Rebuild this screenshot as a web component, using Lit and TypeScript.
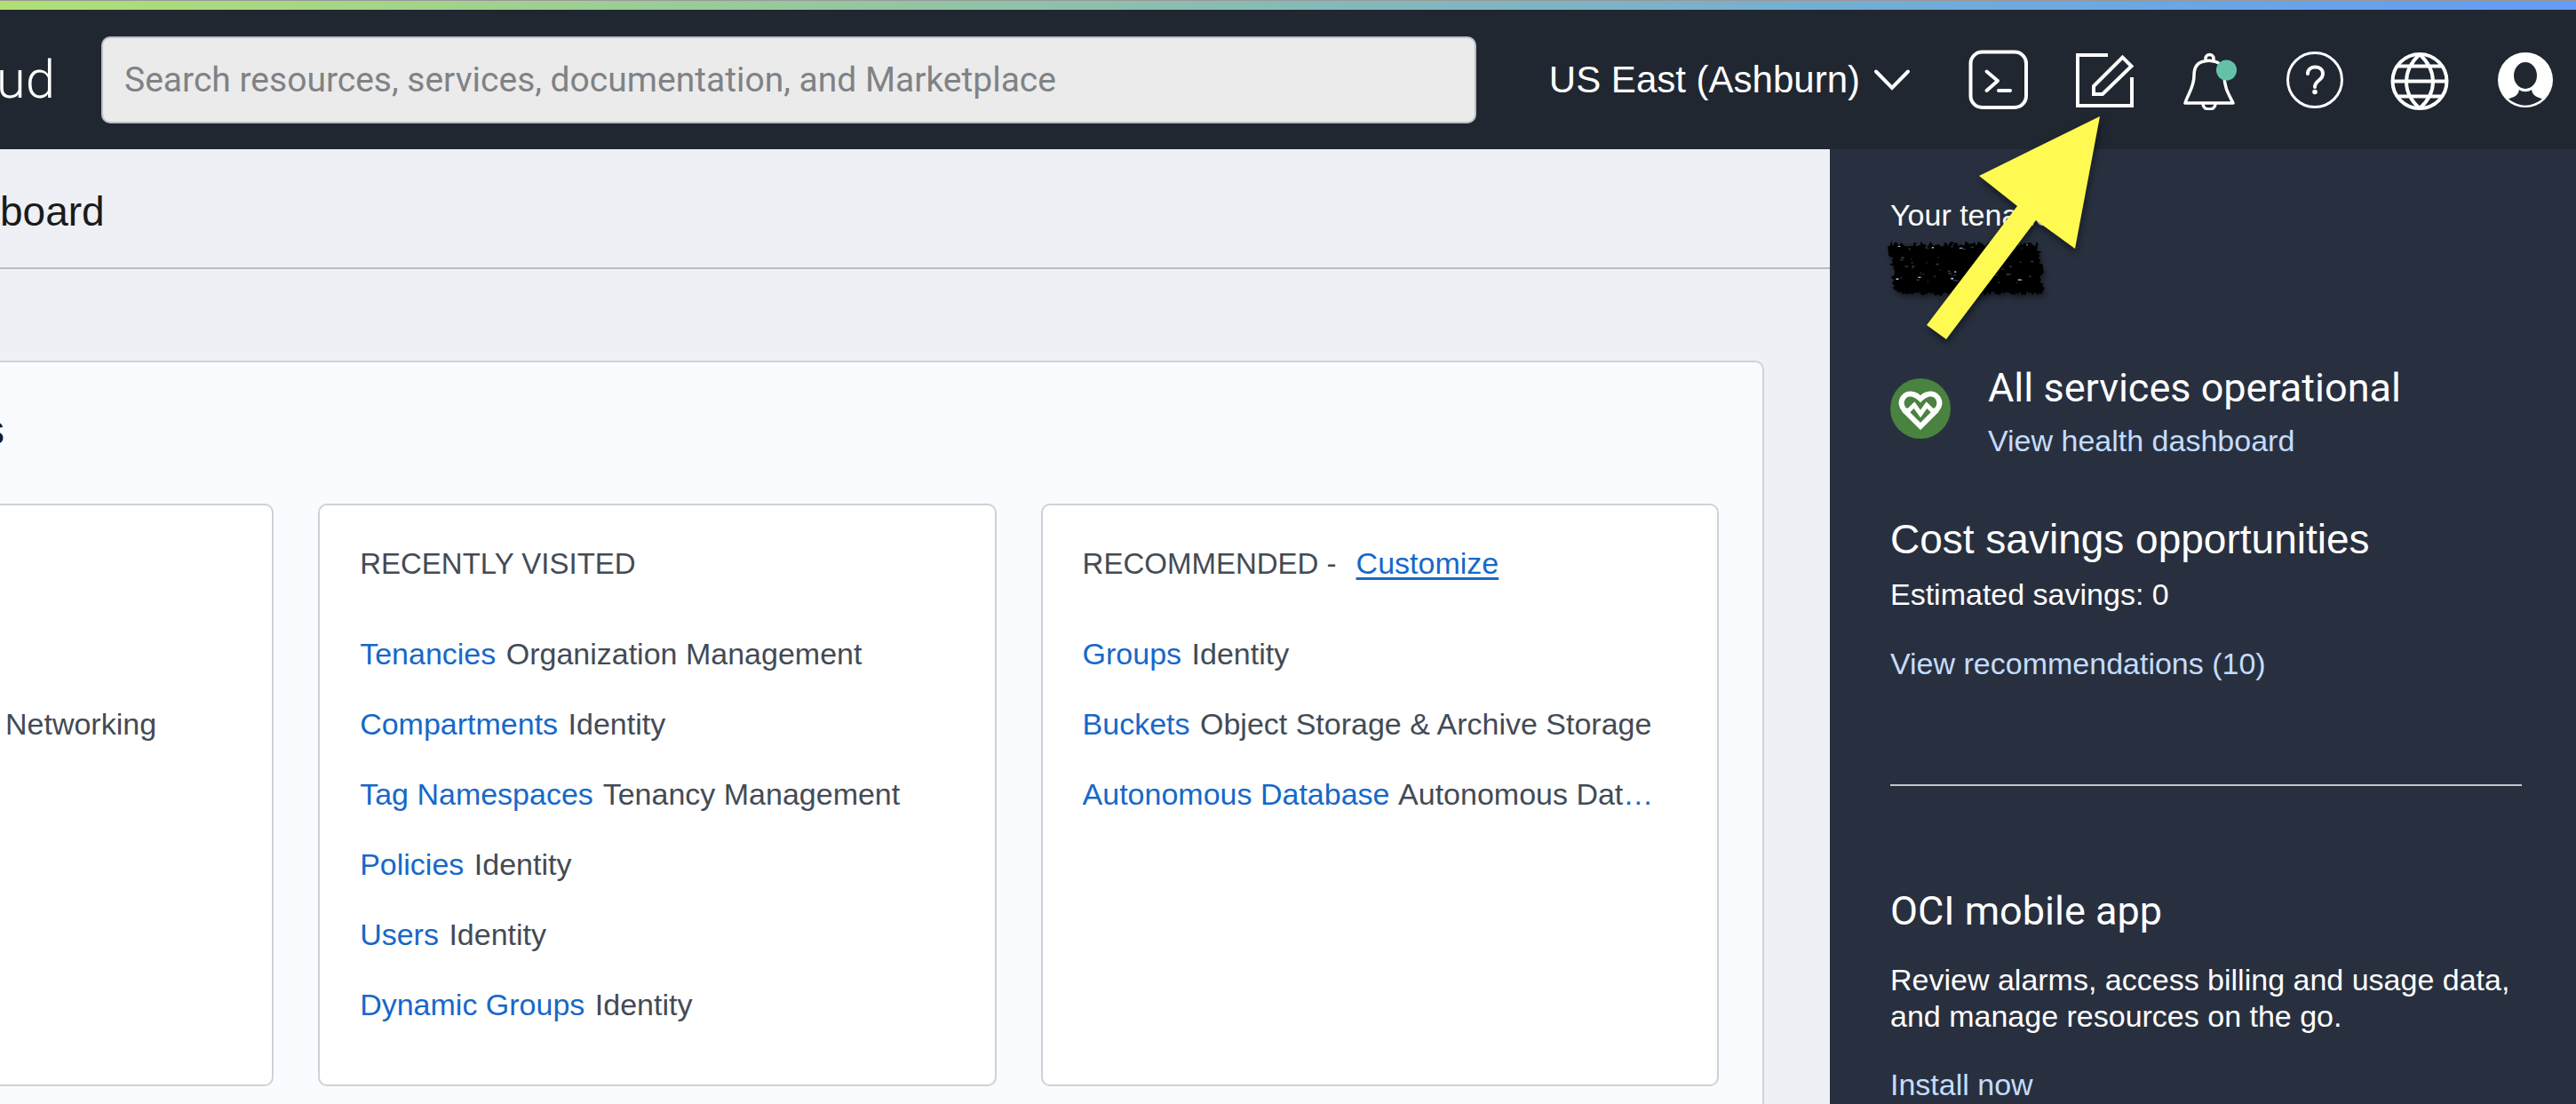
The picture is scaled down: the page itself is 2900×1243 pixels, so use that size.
import { LitElement, html, css, svg } from "lit";
import { customElement } from "lit/decorators.js";

interface ServiceLink {
  name: string;
  group: string;
}

const RECENT: ServiceLink[] = [
  { name: "Tenancies", group: "Organization Management" },
  { name: "Compartments", group: "Identity" },
  { name: "Tag Namespaces", group: "Tenancy Management" },
  { name: "Policies", group: "Identity" },
  { name: "Users", group: "Identity" },
  { name: "Dynamic Groups", group: "Identity" },
];

const RECOMMENDED: ServiceLink[] = [
  { name: "Groups", group: "Identity" },
  { name: "Buckets", group: "Object Storage & Archive Storage" },
  { name: "Autonomous Database", group: "Autonomous Database" },
];

/* Rough-edged marker outline and the specks left uncovered inside it. */
function scribble() {
  let seed = 7;
  const rnd = () => (seed = (seed * 16807) % 2147483647) / 2147483647;
  const pts: string[] = [];
  for (let x = 5; x < 172; x += 2) pts.push(`${x},${(rnd() * 7).toFixed(1)}`);
  for (let y = 5; y < 56; y += 2) pts.push(`${(167 + y / 8 + rnd() * 6).toFixed(1)},${y}`);
  for (let x = 174; x > 12; x -= 2) pts.push(`${x},${(57 + rnd() * 5).toFixed(1)}`);
  for (let y = 55; y > 4; y -= 2) pts.push(`${(y / 10 + rnd() * 6).toFixed(1)},${y}`);
  const specks = Array.from({ length: 70 }, (_, i) => {
    const x = 8 + rnd() * 158;
    const y = i % 3 ? 18 + rnd() * 30 : 3 + rnd() * 6;
    return { x, y, w: 1 + rnd() * 3, h: 1 + rnd(), light: i % 7 === 0 };
  });
  return { outline: pts.join(" "), specks };
}

const MARK = scribble();

@customElement("app-root")
export class AppRoot extends LitElement {
  static styles = css`
    :host {
      display: block;
      font-family: "Liberation Sans", Arial, sans-serif;
      font-size: 34px;
      line-height: 41px;
      color: #434b55;
    }
    * {
      box-sizing: border-box;
    }
    h1, h2, h3, p, ul {
      margin: 0;
      padding: 0;
      font-weight: 400;
      font-size: inherit;
    }
    ul {
      list-style: none;
    }
    a {
      color: #1768c8;
      text-decoration: none;
    }
    button {
      font: inherit;
      color: inherit;
      background: none;
      border: 0;
      padding: 0;
      cursor: pointer;
    }
    svg {
      display: block;
    }
    .shell {
      position: relative;
      display: flex;
      flex-direction: column;
      height: 100vh;
      overflow: hidden;
      background: #eff0f5;
    }
    .stripe {
      flex: none;
      height: 11px;
      border-top: 1px solid #989898;
      background: linear-gradient(90deg, #b1df74, #84b9b9 52%, #6ba6e4 84%, #649bf5);
    }
    .topbar {
      flex: none;
      display: flex;
      align-items: center;
      height: 157px;
      padding-right: 23px;
      background: #202731;
      color: #fff;
    }
    .brand {
      flex: none;
      display: flex;
      justify-content: flex-end;
      width: 62px;
      overflow: hidden;
      font: 300 60px/72px Roboto, sans-serif;
    }
    .search {
      flex: 1;
      min-width: 0;
      margin-left: 52px;
    }
    .search input {
      display: block;
      width: 100%;
      height: 98px;
      padding: 0 24px;
      border: 2px solid #b9c0c6;
      border-radius: 10px;
      background: #ebebeb;
      font: 400 39px/48px Roboto, sans-serif;
      color: #333;
    }
    .search input::placeholder {
      color: #808285;
      opacity: 1;
    }
    .region {
      flex: none;
      display: flex;
      align-items: center;
      gap: 15px;
      margin: 0 65px 0 82px;
      font-size: 42px;
      line-height: 48px;
    }
    .tools {
      flex: none;
      display: flex;
      justify-content: space-between;
      width: 661px;
    }
    .body {
      flex: 1;
      display: flex;
      min-height: 0;
    }
    .main {
      flex: 1;
      min-width: 0;
      overflow: hidden;
    }
    .crumb {
      height: 135px;
      padding: 43px 0 0;
      border-bottom: 2px solid #b4bdc7;
      font-size: 46px;
      line-height: 54px;
      color: #191b1e;
    }
    .panel {
      margin: 103px 74px 0 0;
      padding: 49px 49px 49px 0;
      border: 2px solid #cdd2d7;
      border-left: 0;
      border-radius: 0 10px 10px 0;
      background: #fafbff;
    }
    .panel-title {
      margin: 0 0 56px -18px;
      font-size: 46px;
      line-height: 54px;
      color: #191b1e;
    }
    .cards {
      display: grid;
      grid-template-columns: minmax(0, 308fr) minmax(0, 763fr) minmax(0, 763fr);
      gap: 50px;
    }
    .card {
      padding: 45px 56px 69px 45px;
      border: 2px solid #cdd2d7;
      border-radius: 10px;
      background: #fff;
    }
    .card.first {
      padding: 226px 0 0 6px;
      border-left: 0;
      border-radius: 0 10px 10px 0;
    }
    .card-title {
      display: flex;
      gap: 22px;
      margin-bottom: 61px;
      font-size: 33px;
    }
    .card-title a {
      font-size: 34px;
      text-decoration: underline;
      text-decoration-thickness: 3px;
      text-underline-offset: 4px;
    }
    .links {
      display: grid;
      gap: 38px;
    }
    .links li {
      overflow: hidden;
      text-overflow: ellipsis;
      white-space: nowrap;
      color: #1768c8;
    }
    .links a {
      margin-right: 2px;
    }
    .group {
      color: #434b55;
    }
    .side {
      flex: 0 0 840px;
      padding: 54px 61px 0 68px;
      background: #28303f;
      color: #fff;
    }
    .side a {
      color: #c4dcfc;
    }
    .side a, .side p {
      display: block;
    }
    .mark {
      margin: 8px 0 77px -4px;
      filter: drop-shadow(2px 4px 3px rgba(0, 0, 0, 0.4));
    }
    .status {
      display: flex;
      gap: 42px;
      margin-bottom: 63px;
    }
    .status svg {
      flex: none;
      margin-top: 16px;
    }
    .side h2 {
      font-size: 46px;
      line-height: 54px;
    }
    .side h2.alt {
      font-family: Roboto, sans-serif;
      font-size: 45px;
    }
    .status h2 {
      margin-bottom: 12px;
    }
    .savings h2 {
      margin-bottom: 15px;
    }
    .savings p {
      margin-bottom: 37px;
    }
    .rule {
      height: 2px;
      margin: 115px 0 114px;
      border: 0;
      background: #c3c5c9;
    }
    .app h2 {
      margin-bottom: 30px;
    }
    .app p {
      margin-bottom: 36px;
    }
    .pointer {
      position: absolute;
      top: 122px;
      right: 526px;
      overflow: visible;
      pointer-events: none;
      filter: drop-shadow(1px 5px 4px rgba(0, 0, 0, 0.45));
    }
  `;

  private icon(label: string, body: unknown) {
    return html`<button type="button" aria-label=${label}>
      <svg width="68" height="68" viewBox="0 0 68 68" fill="none" stroke="#fff" stroke-width="4">${body}</svg>
    </button>`;
  }

  private links(items: ServiceLink[]) {
    return html`<ul class="links">
      ${items.map((i) => html`<li><a href="#">${i.name}</a> <span class="group">${i.group}</span></li>`)}
    </ul>`;
  }

  render() {
    return html`
      <div class="shell">
        <div class="stripe"></div>
        <header class="topbar">
          <div class="brand">ud</div>
          <div class="search">
            <input type="search" aria-label="Search" placeholder="Search resources, services, documentation, and Marketplace" />
          </div>
          <button type="button" class="region">
            <span>US East (Ashburn)</span>
            <svg width="42" height="26" viewBox="0 0 42 26" fill="none" stroke="#fff" stroke-width="4" stroke-linecap="round">
              <path d="M3 3.500L21 22L39 3.500" />
            </svg>
          </button>
          <nav class="tools">
            ${this.icon("Developer tools", svg`
              <rect x="2.500" y="2.500" width="62.500" height="62.500" rx="13" />
              <g stroke-linecap="round" stroke-linejoin="round"><path d="M20.500 24.500L33 35L20.500 46M34 46H47" /></g>`)}
            ${this.icon("Edit", svg`
              <path d="M38 6H4V63H65V31M22 41L54.500 8.500L64.500 18.500L32 50H22Z" />`)}
            ${this.icon("Announcements", svg`
              <path stroke-width="3.500" stroke-linejoin="round" d="M30 13V10a4.500 4.500 0 0 1 9 0V13M29 13C20 14 17 21 17 29C17 42 11 48 7 60H61C56 50 51 43 51 29C51 21 47 14 39 13C35 12 32 12 29 13M27 61C27 69 41 69 41 61" />
              <circle cx="53.500" cy="23" r="11.500" fill="#64c1a8" stroke="none" />`)}
            ${this.icon("Help", svg`
              <circle cx="34" cy="34" r="30.500" stroke-width="3" />
              <path stroke-linecap="round" d="M26 27C26 17 43 17 43 27C43 35 34 34 34 42" />
              <circle cx="34" cy="47.500" r="2.800" fill="#fff" stroke="none" />`)}
            ${this.icon("Language", svg`
              <circle cx="34" cy="35.500" r="30.500" />
              <path d="M34 5C14 24 14 48 34 66C54 48 54 24 34 5M3 35.500H65M9 18.500H59M9 52.500H59" />`)}
            ${this.icon("Profile", svg`
              <circle cx="34" cy="34" r="31" fill="#fff" stroke="none" />
              <ellipse cx="34" cy="29" rx="13" ry="15" fill="#202731" stroke="none" />
              <path fill="#202731" stroke="none" d="M27 45C31 48 37 48 41 45C42 52 47 53 53 55.500C41 65 27 65 15 55.500C21 53 26 52 27 45Z" />`)}
          </nav>
        </header>

        <div class="body">
          <main class="main">
            <h1 class="crumb">board</h1>
            <section class="panel">
              <h2 class="panel-title">s</h2>
              <div class="cards">
                <section class="card first"><p class="group">Networking</p></section>
                <section class="card">
                  <h3 class="card-title">RECENTLY VISITED</h3>
                  ${this.links(RECENT)}
                </section>
                <section class="card">
                  <h3 class="card-title"><span>RECOMMENDED -</span><a href="#">Customize</a></h3>
                  ${this.links(RECOMMENDED)}
                </section>
              </div>
            </section>
          </main>

          <aside class="side">
            <p>Your tenancy</p>
            <svg class="mark" width="180" height="62" viewBox="0 0 180 62">
              <polygon points=${MARK.outline} fill="#000" />
              ${MARK.specks.map((s) => svg`<rect x=${s.x} y=${s.y} width=${s.w} height=${s.h} fill=${s.light ? "#a9c0dc" : "#28303f"} />`)}
            </svg>
            <section class="status">
              <svg width="68" height="68" viewBox="0 0 68 68" fill="none" stroke="#fff" stroke-width="6">
                <circle cx="34" cy="34" r="34" fill="#4a8240" stroke="none" />
                <path d="M34 54L16 36C8 26 16 15 26 18C30 19 32 21 34 23C36 21 38 19 42 18C52 15 60 26 52 36Z" />
                <path stroke-width="5" d="M14 36H21L27 30L34 40L41 30L47 36H54" />
              </svg>
              <div>
                <h2 class="alt">All services operational</h2>
                <a href="#">View health dashboard</a>
              </div>
            </section>
            <section class="savings">
              <h2>Cost savings opportunities</h2>
              <p>Estimated savings: 0</p>
              <a href="#">View recommendations (10)</a>
            </section>
            <hr class="rule" />
            <section class="app">
              <h2 class="alt">OCI mobile app</h2>
              <p>Review alarms, access billing and usage data, and manage resources on the go.</p>
              <a href="#">Install now</a>
            </section>
          </aside>
        </div>

        <svg class="pointer" width="210" height="270" viewBox="2164 122 210 270" aria-hidden="true">
          <polygon points="2364,131 2228,198 2271,232 2169,366 2191,382 2292,248 2336,280" fill="#fffa52" />
        </svg>
      </div>
    `;
  }
}
